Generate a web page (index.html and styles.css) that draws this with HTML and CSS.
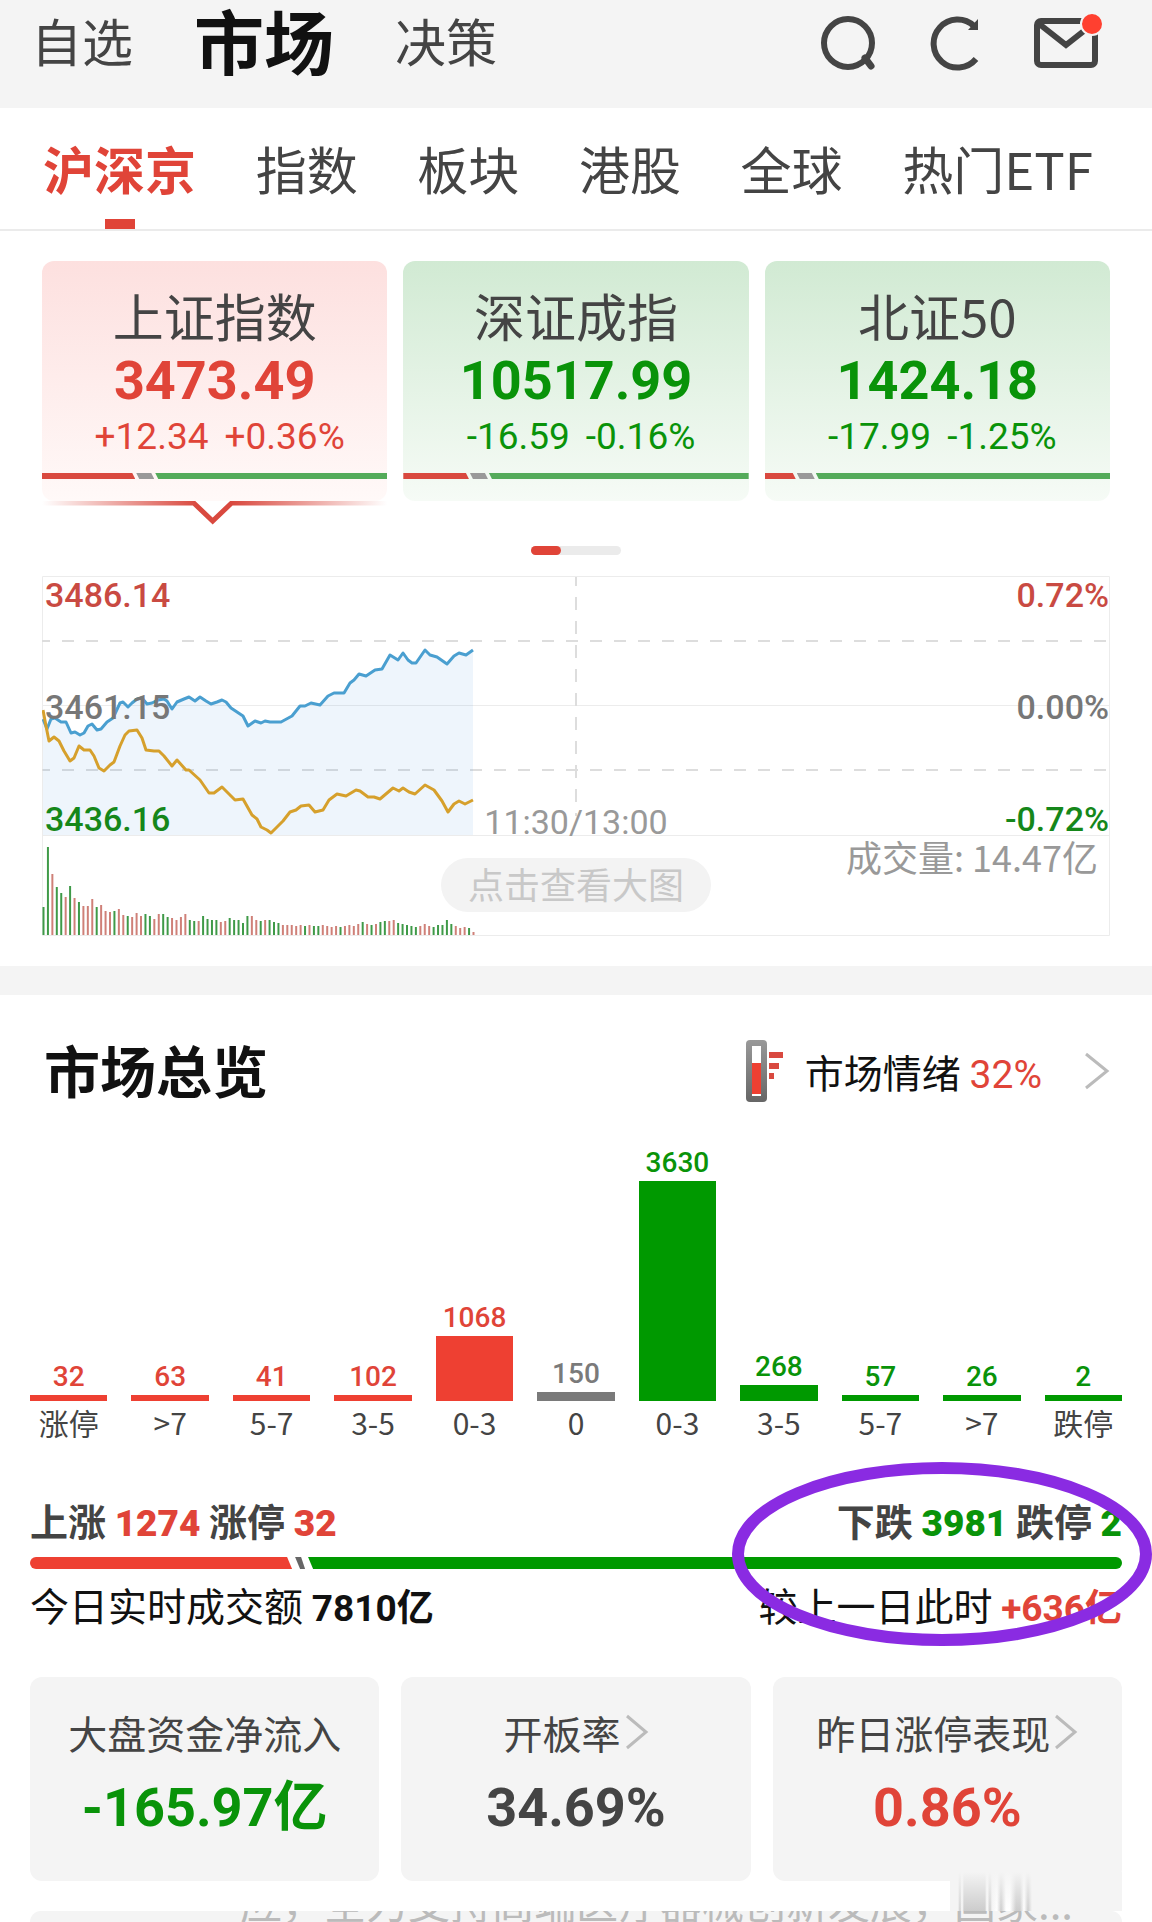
FILE: index.html
```html
<!DOCTYPE html>
<html lang="zh-CN">
<head>
    <meta charset="UTF-8">
    <meta name="viewport" content="width=device-width, initial-scale=1.0">
    <title>市场</title>
    <link rel="stylesheet" href="styles.css">
</head>
<body>
    <header class="topbar">
        <nav class="topnav">
            <a href="#">自选</a>
            <a href="#" class="active">市场</a>
            <a href="#">决策</a>
        </nav>
        <div class="actions">
            <button type="button" aria-label="搜索">
                <svg width="56" height="56" viewBox="0 0 56 56" fill="none" stroke="#444" stroke-width="6">
                    <circle cx="28" cy="28" r="24"/>
                    <path d="M45 43l6 8" stroke-width="7" stroke-linecap="round"/>
                </svg>
            </button>
            <button type="button" aria-label="刷新">
                <svg width="50" height="56" viewBox="0 0 50 56" fill="none" stroke="#444" stroke-width="6">
                    <path d="M46 44A24 24 0 1 1 44 11"/>
                    <path d="M48 4v11H38z" fill="#444" stroke="none"/>
                </svg>
            </button>
            <button type="button" class="mail" aria-label="消息">
                <svg width="64" height="50" viewBox="0 0 64 50" fill="none" stroke="#444" stroke-width="6">
                    <rect x="3" y="3" width="58" height="44" rx="4"/>
                    <path d="M4 5l28 22L60 5"/>
                </svg>
                <span class="dot"></span>
            </button>
        </div>
    </header>

    <nav class="tabs">
        <a href="#" class="active">沪深京</a>
        <a href="#">指数</a>
        <a href="#">板块</a>
        <a href="#">港股</a>
        <a href="#">全球</a>
        <a href="#">热门ETF</a>
    </nav>

    <section class="indices">
        <div class="index-cards">
            <div class="index-card up">
                <h3>上证指数</h3>
                <div class="price">3473.49</div>
                <div class="change"><span>+12.34</span><span>+0.36%</span></div>
                <div class="ratio"><i class="r" style="width: 27%"></i><i class="f"></i><i class="g"></i></div>
                <svg class="pointer" viewBox="0 0 346 24" fill="none">
                    <defs>
                        <linearGradient id="fade" gradientUnits="userSpaceOnUse" x1="0" y1="0" x2="346" y2="0">
                            <stop offset="0" stop-color="#d9493f" stop-opacity="0"/>
                            <stop offset=".45" stop-color="#d9493f"/>
                            <stop offset=".55" stop-color="#d9493f"/>
                            <stop offset="1" stop-color="#d9493f" stop-opacity="0"/>
                        </linearGradient>
                    </defs>
                    <path d="M0 2H152L171 20L190 2H346" stroke="url(#fade)" stroke-width="5"/>
                </svg>
            </div>
            <div class="index-card down">
                <h3>深证成指</h3>
                <div class="price">10517.99</div>
                <div class="change"><span>-16.59</span><span>-0.16%</span></div>
                <div class="ratio"><i class="r" style="width: 19%"></i><i class="f"></i><i class="g"></i></div>
            </div>
            <div class="index-card down">
                <h3>北证50</h3>
                <div class="price">1424.18</div>
                <div class="change"><span>-17.99</span><span>-1.25%</span></div>
                <div class="ratio"><i class="r" style="width: 9%"></i><i class="f"></i><i class="g"></i></div>
            </div>
        </div>

        <div class="pager"><span></span></div>

        <div class="minute">
            <svg class="minute-plot" viewBox="0 0 1068 360" preserveAspectRatio="none" fill="none">
                <!-- grid -->
                <g stroke="#ececec" stroke-width="1">
                    <path d="M.5 .5H1067.5V359.5H.5z"/>
                    <path d="M0 129.5H1068M0 259.5H1068"/>
                </g>
                <path d="M0 65H1068M0 194H1068" stroke="#ddd" stroke-width="2" stroke-dasharray="12 12" stroke-dashoffset="4"/>
                <path d="M534 1V240" stroke="#ddd" stroke-width="2" stroke-dasharray="13 11" stroke-dashoffset="4"/>
                <!-- index line and average line -->
                <path fill="#3f8fe0" fill-opacity=".09" d="M1 143L5 153L9 143L13 142L19 146L24 146L29 157L33 156L38 159L42 157L46 150L50 148L55 154L59 153L65 146L71 142L78 127L81 126L86 131L90 127L95 123L100 122L105 128L110 127L116 124L122 123L125 125L130 133L135 126L142 123L147 121L153 125L158 121L164 125L169 128L175 126L180 124L184 126L189 132L195 136L201 140L206 150L213 145L219 147L223 145L228 146L239 146L250 140L258 130L263 130L269 127L278 129L286 120L292 117L302 117L308 107L312 104L317 98L324 100L333 94L340 93L348 79L356 84L361 77L366 84L370 87L374 87L383 74L388 79L395 81L405 88L412 80L417 77L424 79L431 74V259H1z"/>
                <path stroke="#4a9fd0" stroke-width="3" stroke-linejoin="round" d="M1 143L5 153L9 143L13 142L19 146L24 146L29 157L33 156L38 159L42 157L46 150L50 148L55 154L59 153L65 146L71 142L78 127L81 126L86 131L90 127L95 123L100 122L105 128L110 127L116 124L122 123L125 125L130 133L135 126L142 123L147 121L153 125L158 121L164 125L169 128L175 126L180 124L184 126L189 132L195 136L201 140L206 150L213 145L219 147L223 145L228 146L239 146L250 140L258 130L263 130L269 127L278 129L286 120L292 117L302 117L308 107L312 104L317 98L324 100L333 94L340 93L348 79L356 84L361 77L366 84L370 87L374 87L383 74L388 79L395 81L405 88L412 80L417 77L424 79L431 74"/>
                <path stroke="#d6a02c" stroke-width="3" stroke-linejoin="round" d="M1 134L4 150L7 165L12 161L17 165L22 175L28 185L32 182L37 170L42 174L48 174L52 180L57 192L62 195L68 189L72 186L78 170L83 159L87 155L95 154L100 162L104 174L112 175L117 175L122 180L130 190L135 184L144 194L147 194L158 204L167 217L172 217L180 211L188 219L193 224L201 223L210 239L215 243L219 251L225 254L229 257L236 250L241 245L248 236L254 234L259 230L267 229L273 236L281 234L287 224L295 218L304 220L314 214L318 215L326 221L332 221L338 223L351 212L357 215L361 212L367 216L373 218L383 209L392 214L400 225L406 236L412 228L417 225L423 228L431 224"/>
                <g id="volume" stroke-width="2"></g>
            </svg>
            <span class="tick left top red">3486.14</span>
            <span class="tick left mid">3461.15</span>
            <span class="tick left low green">3436.16</span>
            <span class="tick right top red">0.72%</span>
            <span class="tick right mid">0.00%</span>
            <span class="tick right low green">-0.72%</span>
            <span class="tick noon">11:30/13:00</span>
            <span class="turnover">成交量: 14.47亿</span>
            <button type="button" class="enlarge">点击查看大图</button>
        </div>
    </section>

    <section class="overview">
        <div class="overview-head">
            <h2>市场总览</h2>
            <a href="#" class="mood">
                <svg width="38" height="62" viewBox="0 0 38 62">
                    <defs>
                        <linearGradient id="tube" x1="0" y1="0" x2="0" y2="1">
                            <stop offset="0" stop-color="#999"/>
                            <stop offset="1" stop-color="#666"/>
                        </linearGradient>
                    </defs>
                    <rect x="0" y="0" width="21" height="62" rx="4" fill="url(#tube)"/>
                    <rect x="6" y="6" width="9" height="50" fill="#fff"/>
                    <path d="M6 23h9v31H6z" fill="#ee4032"/>
                    <path d="M23 12h14v6H23zM23 23h10v6H23zM23 33h5v6h-5z" fill="#d9493f"/>
                </svg>
                <span>市场情绪 <b class="num red">32%</b></span>
                <svg width="26" height="38" viewBox="0 0 26 38" fill="none" stroke="#bbb" stroke-width="3">
                    <path d="M2 2l21 17L2 36"/>
                </svg>
            </a>
        </div>

        <div class="spread">
            <div class="col red"><span>32</span><i style="height: 6px"></i><em>涨停</em></div>
            <div class="col red"><span>63</span><i style="height: 6px"></i><em>&gt;7</em></div>
            <div class="col red"><span>41</span><i style="height: 6px"></i><em>5-7</em></div>
            <div class="col red"><span>102</span><i style="height: 6px"></i><em>3-5</em></div>
            <div class="col red"><span>1068</span><i style="height: 65px"></i><em>0-3</em></div>
            <div class="col flat"><span>150</span><i style="height: 9px"></i><em>0</em></div>
            <div class="col green"><span>3630</span><i style="height: 220px"></i><em>0-3</em></div>
            <div class="col green"><span>268</span><i style="height: 16px"></i><em>3-5</em></div>
            <div class="col green"><span>57</span><i style="height: 6px"></i><em>5-7</em></div>
            <div class="col green"><span>26</span><i style="height: 6px"></i><em>&gt;7</em></div>
            <div class="col green"><span>2</span><i style="height: 6px"></i><em>跌停</em></div>
        </div>

        <div class="breadth">
            <div class="line strong">
                <p>上涨 <b class="num red">1274</b> 涨停 <b class="num red">32</b></p>
                <p>下跌 <b class="num green">3981</b> 跌停 <b class="num green">2</b></p>
            </div>
            <div class="ratio big"><i class="r" style="width: 24%"></i><i class="f"></i><i class="g"></i></div>
            <div class="line">
                <p>今日实时成交额 <b class="num">7810亿</b></p>
                <p>较上一日此时 <b class="num red">+636亿</b></p>
            </div>
            <svg class="circle-mark" width="420" height="184" viewBox="0 0 420 184" fill="none">
                <ellipse cx="210" cy="92" rx="204" ry="86" stroke="#8a2be2" stroke-width="12"/>
            </svg>
        </div>

        <div class="stats">
            <div class="stat">
                <h4>大盘资金净流入</h4>
                <div class="price green">-165.97亿</div>
            </div>
            <a href="#" class="stat">
                <h4>开板率<svg width="24" height="36" viewBox="0 0 24 36" fill="none" stroke="#bbb" stroke-width="3"><path d="M2 2l19 16L2 34"/></svg></h4>
                <div class="price">34.69%</div>
            </a>
            <a href="#" class="stat">
                <h4>昨日涨停表现<svg width="24" height="36" viewBox="0 0 24 36" fill="none" stroke="#bbb" stroke-width="3"><path d="M2 2l19 16L2 34"/></svg></h4>
                <div class="price red">0.86%</div>
            </a>
        </div>

        <div class="ticker"><p>应，全力支持高端医疗器械创新发展，国家...</p></div>
        <div class="smudge"></div>
    </section>

    <script src="volume.js"></script>
</body>
</html>
```
FILE: volume.js
```js
// one bar per sample, r = up, g = down
const volume = [
    28, 88, 61, 48, 42, 38, 49, 37, 33, 29, 29, 36, 28, 30, 24, 23, 24, 26, 20, 19,
    18, 22, 19, 21, 19, 16, 21, 21, 18, 17, 15, 18, 21, 15, 14, 14, 19, 16, 15, 15,
    13, 14, 17, 15, 15, 12, 19, 19, 15, 14, 15, 15, 13, 12, 10, 10, 10, 9, 10, 9,
    10, 9, 9, 10, 9, 8, 9, 8, 9, 10, 9, 11, 13, 11, 10, 11, 13, 14, 14, 15,
    12, 11, 10, 9, 8, 9, 11, 9, 8, 10, 10, 15, 11, 9, 7, 8, 7, 3
];
const dirs = 'ggrggrgrgrrrgrrrgrrgrrrggrrggrrrrggrggggrrgggggrrgrgggrrrrrgrggrrrrgrrrrgrgrggrrgggggrrrgggggrrrgrrr';

const group = document.getElementById('volume');
const step = 430 / (volume.length - 1);

volume.forEach(function(h, i) {
    const bar = document.createElementNS('http://www.w3.org/2000/svg', 'path');
    bar.setAttribute('d', 'M' + (1.5 + i * step) + ' 359v-' + h);
    bar.setAttribute('stroke', dirs[i] === 'r' ? '#cf8078' : '#3f9a48');
    group.appendChild(bar);
});
```
FILE: styles.css
```css
:root {
    --red: #e04438;
    --green: #099309;
    --text: #444;
    --panel: #f4f4f4;
    --cjk: "Noto Sans CJK SC", sans-serif;
    --digits: Roboto, "Noto Sans CJK SC", sans-serif;
}

* {
    box-sizing: border-box;
}

body {
    margin: 0;
    background: #fff;
    color: var(--text);
    font-family: var(--cjk);
    overflow-x: hidden;
}

a {
    color: inherit;
    text-decoration: none;
}

button {
    border: 0;
    padding: 0;
    background: none;
    font-family: inherit;
}

h2, h3, h4, p {
    margin: 0;
    font-weight: 400;
}

svg {
    display: block;
}

.red { color: var(--red); }
.green { color: var(--green); }

.num {
    font-family: var(--digits);
    line-height: 1;
}

/* top bar */
.topbar {
    display: flex;
    justify-content: space-between;
    align-items: flex-start;
    height: 108px;
    padding: 0 54px 0 31px;
    background: var(--panel);
}

.topnav {
    display: flex;
    align-items: center;
    gap: 61px;
    height: 80px;
    font-size: 51px;
}

.topnav .active {
    color: #111;
    font-size: 70px;
    line-height: 80px;
    font-weight: 700;
}

.actions {
    display: flex;
    align-items: center;
    gap: 54px;
    height: 86px;
}

.mail {
    position: relative;
}

.dot {
    position: absolute;
    top: -6px;
    right: -6px;
    width: 24px;
    height: 24px;
    border: 2px solid var(--panel);
    border-radius: 50%;
    background: #ff4030;
}

/* market tabs */
.tabs {
    display: flex;
    justify-content: space-between;
    padding: 0 59px 0 43px;
    border-bottom: 2px solid #ebebeb;
    font-size: 51px;
    line-height: 121px;
}

.tabs .active {
    position: relative;
    color: var(--red);
    font-weight: 700;
}

.tabs .active::after {
    content: "";
    position: absolute;
    left: 50%;
    bottom: 0;
    width: 30px;
    height: 10px;
    margin-left: -15px;
    background: var(--red);
}

/* index cards */
.indices {
    padding: 30px 42px;
    border-bottom: 29px solid var(--panel);
}

.index-cards {
    display: grid;
    grid-template-columns: repeat(3, 1fr);
    gap: 16px;
}

.index-card {
    position: relative;
    padding: 26px 0 22px;
    border-radius: 12px;
    text-align: center;
}

.index-card.up {
    background: linear-gradient(#fde0df, #fff9f8);
    color: var(--red);
}

.index-card.down {
    background: linear-gradient(#d1ead3, #f6fbf6);
    color: var(--green);
}

.index-card h3 {
    color: var(--text);
    font-size: 51px;
    line-height: 56px;
}

.price {
    font-family: var(--digits);
    font-size: 54px;
    font-weight: 700;
    line-height: 76px;
}

.change {
    display: flex;
    justify-content: center;
    gap: 16px;
    padding-left: 10px;
    font-family: var(--digits);
    font-size: 37px;
    line-height: 36px;
}

.ratio {
    display: flex;
    gap: 1px;
    height: 6px;
    margin-top: 18px;
}

.ratio .r {
    background: #d9493f;
    clip-path: polygon(0 0, calc(100% - 3px) 0, 100% 100%, 0 100%);
}

.ratio .f {
    width: 18px;
    background: #999;
    clip-path: polygon(0 0, calc(100% - 3px) 0, 100% 100%, 3px 100%);
}

.ratio .g {
    flex: 1;
    background: #54ab5a;
    clip-path: polygon(0 0, 100% 0, 100% 100%, 3px 100%);
}

.pointer {
    position: absolute;
    top: 100%;
    left: 0;
    width: 100%;
}

.pager {
    width: 90px;
    height: 9px;
    margin: 45px auto 21px;
    border-radius: 5px;
    background: #ebebeb;
}

.pager span {
    display: block;
    width: 30px;
    height: 9px;
    border-radius: 5px;
    background: var(--red);
}

/* minute chart, labels lie over the plot */
.minute {
    position: relative;
}

.minute-plot {
    width: 100%;
    height: 360px;
}

.tick {
    position: absolute;
    color: #777;
    font-family: var(--digits);
    font-size: 34px;
    font-weight: 500;
    line-height: 34px;
}

.tick.red { color: #c94a42; }
.tick.green { color: #15871a; }
.tick.left { left: 3px; }
.tick.right { right: 1px; }
.tick.top { top: 2px; }
.tick.mid { top: 114px; }
.tick.low { top: 226px; }

.tick.noon {
    top: 229px;
    left: 0;
    right: 0;
    color: #999;
    font-weight: 400;
    text-align: center;
}

.turnover {
    position: absolute;
    top: 262px;
    right: 12px;
    color: #999;
    font-size: 36px;
    line-height: 36px;
}

.enlarge {
    position: absolute;
    top: 282px;
    left: 50%;
    width: 270px;
    height: 54px;
    margin-left: -135px;
    padding-bottom: 4px;
    border-radius: 27px;
    background: #f3f3f3;
    color: #c8c8c8;
    font-size: 36px;
    line-height: 50px;
}

/* overview */
.overview {
    position: relative;
    padding: 36px 30px 0;
}

.overview-head {
    display: flex;
    justify-content: space-between;
    align-items: center;
    height: 80px;
    padding: 0 12px 0 14px;
    color: #111;
}

.overview-head h2 {
    margin-bottom: 4px;
    font-size: 56px;
    font-weight: 700;
    line-height: 76px;
}

.mood {
    display: flex;
    align-items: center;
    font-size: 39px;
    line-height: 60px;
}

.mood span {
    margin: 0 42px 0 21px;
}

.mood .num {
    font-weight: 400;
}

.spread {
    display: grid;
    grid-template-columns: repeat(11, 1fr);
    gap: 24px;
    height: 336px;
}

.col {
    display: flex;
    flex-direction: column;
    justify-content: flex-end;
    text-align: center;
}

.col span {
    font-family: var(--digits);
    font-size: 28px;
    font-weight: 500;
    line-height: 36px;
}

.col i {
    background: currentColor;
}

.col.flat {
    color: #7a7a7a;
}

.col.red i { background: #ee4032; }
.col.green i { background: #009900; }

.col em {
    margin-bottom: 4px;
    color: var(--text);
    font-size: 30px;
    font-style: normal;
    line-height: 42px;
}

.breadth {
    position: relative;
    margin-top: 49px;
}

.line {
    display: flex;
    justify-content: space-between;
    height: 50px;
    color: #111;
    font-size: 39px;
    line-height: 48px;
}

.line .num {
    font-size: 37px;
}

.line.strong p {
    color: var(--text);
    font-size: 38px;
    font-weight: 700;
}

.ratio.big {
    height: 12px;
    margin: 11px 0;
    border-radius: 6px;
    overflow: hidden;
}

.big .r {
    background: #ee4032;
    clip-path: polygon(0 0, calc(100% - 5px) 0, 100% 100%, 0 100%);
}

.big .f {
    width: 14px;
    background: #666;
    clip-path: polygon(2px 0, 8px 0, 12px 100%, 7px 100%);
}

.big .g {
    background: #009900;
    clip-path: polygon(0 0, 100% 0, 100% 100%, 5px 100%);
}

.circle-mark {
    position: absolute;
    top: -34px;
    right: -30px;
}

.stats {
    display: grid;
    grid-template-columns: repeat(3, 1fr);
    gap: 22px;
    margin-top: 47px;
}

.stat {
    height: 204px;
    padding-top: 30px;
    border-radius: 12px;
    background: var(--panel);
    text-align: center;
}

.stat h4 {
    display: flex;
    justify-content: center;
    align-items: center;
    gap: 4px;
    margin-bottom: 13px;
    font-size: 39px;
    line-height: 50px;
}

/* news ticker, mid-scroll */
.ticker {
    display: flex;
    align-items: flex-end;
    height: 11px;
    margin-top: 30px;
    padding-left: 210px;
    border-radius: 12px 12px 0 0;
    background: var(--panel);
    overflow: hidden;
}

.ticker p {
    color: #bbb;
    font-size: 42px;
    line-height: 42px;
    white-space: nowrap;
}

/* streaks above the end of the ticker */
.smudge {
    position: absolute;
    right: 30px;
    bottom: 11px;
    width: 172px;
    height: 39px;
    background:
        linear-gradient(var(--panel), rgba(244, 244, 244, 0)),
        linear-gradient(90deg, var(--panel) 8px, #ccc 10px, #fff 12px, #ccc 14px, #ccc 35px, #fff 37px, #ccc 40px, var(--panel) 42px, #fff 47px, #ccc 51px, #fff 56px, #fff 60px, #ccc 66px, #ccc 70px, #fff 74px, #ccc 78px, var(--panel) 82px);
}
```
